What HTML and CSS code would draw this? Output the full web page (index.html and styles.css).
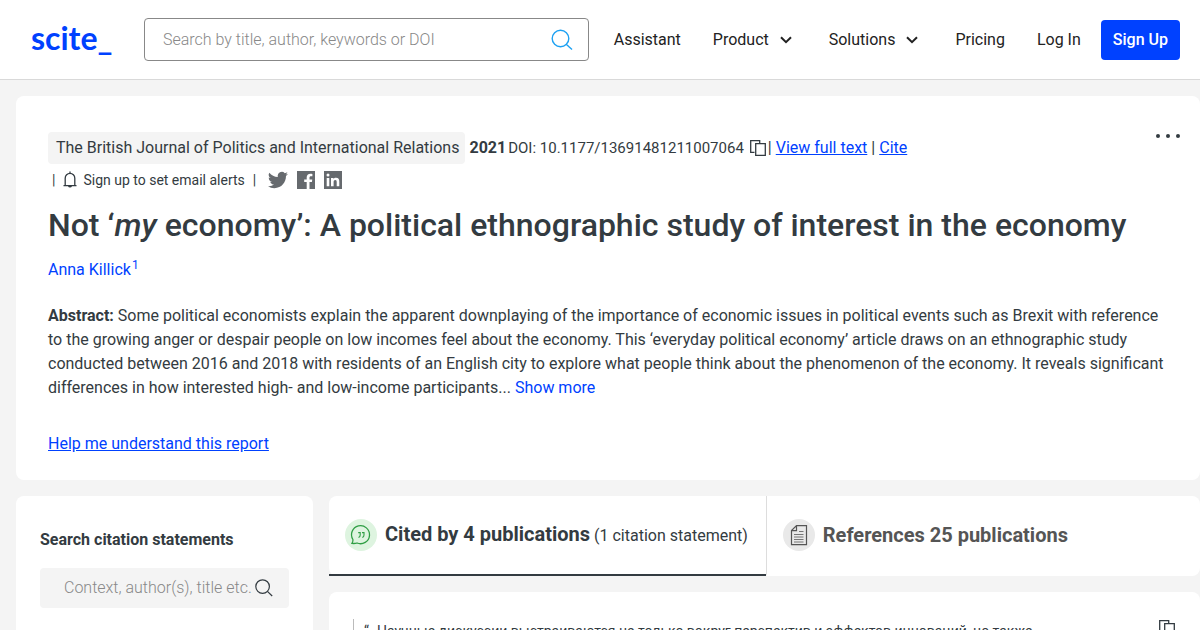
FILE: index.html
```html
<!DOCTYPE html>
<html lang="en">
<head>
<meta charset="utf-8">
<title>Not ‘my economy’: A political ethnographic study of interest in the economy</title>
<link rel="stylesheet" href="styles.css">
</head>
<body>
<header class="header">
  <a class="logo" href="#">scite_</a>
  <form class="search">
    <input class="search-input" type="text" aria-label="Search" placeholder="Search by title, author, keywords or DOI">
    <button class="icon-button search-button" type="button" aria-label="Submit search">
      <svg width="22" height="22" viewBox="0 0 22 22" fill="none" stroke="#1da1f2" stroke-width="1.4"><circle cx="9.5" cy="9.5" r="8.3"/><path d="M15.2 15.2l5.8 5.3"/></svg>
    </button>
  </form>
  <nav class="nav">
    <a class="nav-link" href="#">Assistant</a>
    <button class="nav-link nav-menu" type="button">Product
      <svg width="12" height="8" viewBox="0 0 12 8" fill="none" stroke="currentColor" stroke-width="2"><path d="M1 1.2l5 5 5-5"/></svg>
    </button>
    <button class="nav-link nav-menu" type="button">Solutions
      <svg width="12" height="8" viewBox="0 0 12 8" fill="none" stroke="currentColor" stroke-width="2"><path d="M1 1.2l5 5 5-5"/></svg>
    </button>
    <a class="nav-link" href="#">Pricing</a>
    <a class="nav-link" href="#">Log In</a>
    <a class="signup" href="#">Sign Up</a>
  </nav>
</header>
<main class="page">
  <article class="card paper">
    <div class="paper-top">
      <div class="meta">
        <span class="journal">The British Journal of Politics and International Relations</span>
        <strong class="year">2021</strong>
        <span class="doi">DOI: 10.1177/13691481211007064</span>
        <button class="icon-button copy" type="button" aria-label="Copy DOI">
          <svg width="18" height="18" viewBox="0 0 18 18" fill="none" stroke="#333b41" stroke-width="1.3"><path d="M5.5 13.4H1.7V1.7h9v2.5"/><path d="M6.7 4.7h9.6v11.6H6.7z"/></svg>
        </button>
        <span>|</span>
        <a class="link" href="#">View full text</a>
        <span>|</span>
        <a class="link" href="#">Cite</a>
      </div>
      <button class="icon-button more" type="button" aria-label="More actions">
        <svg width="24" height="4" viewBox="0 0 24 4" fill="#333b41"><circle cx="2" cy="2" r="2"/><circle cx="12" cy="2" r="2"/><circle cx="22" cy="2" r="2"/></svg>
      </button>
    </div>
    <div class="alerts">
      <span>|</span>
      <button class="alert-button" type="button">
        <svg width="14" height="18" viewBox="0 0 14 18" fill="none" stroke="#333b41" stroke-width="1.3"><path d="M.5 14.6h13M2.200 14.500V7.200a4.800 4.800 0 0 1 9.600 0v7.300M7 2.500V.5M5.600 15a1.500 1.500 0 0 0 2.800 0"/></svg>
        Sign up to set email alerts
      </button>
      <span>|</span>
      <div class="social">
        <a class="social-link" href="#" aria-label="Twitter"><svg width="20" height="18" viewBox="0 2 24 20" fill="#666a6e"><path d="M23.95 4.57a10 10 0 0 1-2.82.77 4.96 4.96 0 0 0 2.16-2.72c-.95.55-2 .96-3.13 1.18a4.92 4.92 0 0 0-8.38 4.48C7.69 8.1 4.07 6.13 1.64 3.16a4.92 4.92 0 0 0 1.52 6.57 4.9 4.9 0 0 1-2.23-.61v.06a4.92 4.92 0 0 0 3.95 4.83 5 5 0 0 1-2.21.08 4.94 4.94 0 0 0 4.6 3.42A9.87 9.87 0 0 1 0 19.54a13.99 13.99 0 0 0 7.55 2.21c9.05 0 14-7.5 14-13.98 0-.21 0-.42-.02-.63a9.94 9.94 0 0 0 2.42-2.57z"/></svg></a>
        <a class="social-link" href="#" aria-label="Facebook"><svg width="18" height="18" viewBox="0 0 18 18"><path fill="#666a6e" d="M0 0h18v18h-5.5v-6.9h2.4l.4-2.7h-2.8V6.700c0-.8.4-1.400 1.500-1.400h1.400V2.900c-3.800-.7-5.700.7-5.700 3.500v2H7.200v2.700h2.500V18H0z"/></svg></a>
        <a class="social-link" href="#" aria-label="LinkedIn"><svg width="18" height="18" viewBox="0 0 18 18"><path fill="#666a6e" d="M0 0h18v18H0z"/><path fill="#fff" d="M2.7 6.9h2.6v8.4H2.7zM7 6.9h2.5V8c.5-.8 1.3-1.3 2.5-1.3 2.5 0 3.3 1.5 3.3 4v4.6h-2.6v-4.1c0-1.4-.3-2.2-1.400-2.200-1.200 0-1.700.8-1.700 2.200v4.100H7z"/><circle cx="4" cy="4.1" r="1.5" fill="#fff"/></svg></a>
      </div>
    </div>
    <h1 class="title">Not ‘<em>my</em> economy’: A political ethnographic study of interest in the economy</h1>
    <p class="authors"><a class="author" href="#">Anna Killick<sup class="affil">1</sup></a></p>
    <p class="abstract"><strong>Abstract:</strong> Some political economists explain the apparent downplaying of the importance of economic issues in political events such as Brexit with reference to the growing anger or despair people on low incomes feel about the economy. This ‘everyday political economy’ article draws on an ethnographic study conducted between 2016 and 2018 with residents of an English city to explore what people think about the phenomenon of the economy. It reveals significant differences in how interested high- and low-income participants... <button class="show-more" type="button">Show more</button></p>
    <a class="link help" href="#">Help me understand this report</a>
  </article>
  <div class="columns">
    <aside class="card sidebar">
      <label class="sidebar-title" for="context">Search citation statements</label>
      <div class="filter">
        <input class="filter-input" id="context" type="text" placeholder="Context, author(s), title etc.">
        <button class="icon-button" type="button" aria-label="Search statements">
          <svg width="18" height="18" viewBox="0 0 18 18" fill="none" stroke="#333b41" stroke-width="1.2"><circle cx="7.6" cy="7.6" r="6.8"/><path d="M12.4 12.4l4.8 4.6"/></svg>
        </button>
      </div>
    </aside>
    <section class="results">
      <div class="card tabs">
        <button class="tab tab-active" type="button">
          <svg width="32" height="32" viewBox="0 0 32 32" fill="none"><circle cx="16" cy="16" r="16" fill="#def4e0"/><path d="M7 24.4c1-1.600 1.200-2.700.9-3.900A9 9 0 1 1 12 24c-1.500.500-3 .6-5 .4z" stroke="#2f9e44" stroke-width="1.3"/><path d="M13.200 13.600h2v2.300c0 1.300-.6 2.100-1.700 2.500M17 13.600h2v2.300c0 1.300-.6 2.100-1.700 2.500" stroke="#2f9e44" stroke-width="1.100"/></svg>
          <span class="tab-text"><strong class="tab-name">Cited by 4 publications</strong> (1 citation statement)</span>
        </button>
        <button class="tab" type="button">
          <svg width="32" height="32" viewBox="0 0 32 32" fill="none"><circle cx="16" cy="16" r="16" fill="#e9e9e9"/><path d="M13.500 6.600h10v19h-15v-14zM13.500 6.600v5h-5" stroke="#555" stroke-width="1.200"/><path d="M16 12.500h4.500M11 15.500h9.500M11 18h9.500M11 20.500h9.500M11 23h9.500" stroke="#777"/></svg>
          <strong class="tab-name tab-muted">References 25 publications</strong>
        </button>
      </div>
      <div class="card statement">
        <blockquote class="quote"><span>“</span><span>Научные дискуссии выстраиваются не только вокруг перспектив и эффектов инноваций, но также</span></blockquote>
        <button class="icon-button" type="button" aria-label="Copy statement">
          <svg width="18" height="18" viewBox="0 0 18 18" fill="none" stroke="#333b41" stroke-width="1.3"><path d="M5.500 13.400H1.700V1.700h9v2.500"/><path d="M6.700 4.700h9.600v11.600H6.700z"/></svg>
        </button>
      </div>
    </section>
  </div>
</main>
</body>
</html>
```
FILE: styles.css
```css
* { box-sizing: border-box; }
body {
  margin: 0;
  height: 100vh;
  overflow: hidden;
  background: #f4f4f4;
  color: #333b41;
  font: 16px/24px Roboto, "Liberation Sans", sans-serif;
}
button, input { font: inherit; color: inherit; }
button { border: 0; padding: 0; background: none; cursor: pointer; }
svg { display: block; flex: none; }
.header {
  display: flex;
  align-items: center;
  height: 80px;
  padding: 0 20px 0 31px;
  background: #fff;
  border-bottom: 1px solid #d9d9d9;
}
.logo {
  width: 113px;
  padding-bottom: 4px;
  color: #0041ff;
  font: 700 32px/32px Lato, sans-serif;
  text-decoration: none;
}
.search {
  display: flex;
  flex: 1;
  align-items: center;
  height: 43px;
  padding: 0 15px 0 18px;
  border: 1px solid #888;
  border-radius: 4px;
}
.search-input, .filter-input {
  flex: 1;
  min-width: 0;
  padding: 0;
  border: 0;
  outline: 0;
  background: none;
  font-weight: 300;
}
.search-input::placeholder, .filter-input::placeholder { color: #888; opacity: 1; }
.nav { display: flex; align-items: center; gap: 32px; padding-left: 25px; }
.nav-link { color: #222; text-decoration: none; }
.nav-menu { display: flex; align-items: center; gap: 11px; padding-right: 5px; }
.signup {
  margin-left: -12px;
  padding: 8px 12px;
  border-radius: 4px;
  background: #0041ff;
  color: #fff;
  font-weight: 500;
  text-decoration: none;
}
.page { padding: 16px 0 0 16px; }
.card { background: #fff; border-radius: 8px; }
.paper { padding: 36px 32px 24px; }
.paper-top { display: flex; justify-content: space-between; align-items: flex-start; margin-right: -12px; }
.meta { display: flex; align-items: center; gap: 4px; }
.journal { padding: 4px 6px 4px 8px; border-radius: 4px; background: #f4f4f4; }
.year { margin-right: -2px; }
.doi { font-size: 15px; }
.copy { margin: 0 -3px 0 1px; }
.link { color: #0041ff; text-decoration: underline; }
.more { padding-top: 2px; }
.alerts { display: flex; align-items: center; gap: 8px; height: 32px; padding-left: 4px; font-size: 14px; }
.alert-button { display: flex; align-items: center; gap: 6px; }
.social { display: flex; gap: 9px; padding-left: 4px; }
.title { margin: 8px 0 12px; font-size: 32px; line-height: 42px; font-weight: 500; }
.authors { margin: 0 0 22px; }
.author { color: #0041ff; text-decoration: none; }
.affil { padding-left: 1px; font-size: 12px; line-height: 0; }
.abstract { margin: 0 0 32px; }
.show-more { color: #0041ff; }
.columns { display: flex; gap: 16px; padding-top: 16px; }
.sidebar { flex: 0 0 297px; min-width: 0; height: 400px; padding: 32px 24px; }
.sidebar-title { display: block; font-weight: 700; }
.filter { display: flex; align-items: center; height: 40px; margin-top: 16px; padding: 0 16px 0 24px; border-radius: 4px; background: #f4f4f4; }
.results { flex: 1; min-width: 0; }
.tabs { display: flex; height: 80px; }
.tab { display: flex; align-items: center; gap: 8px; padding: 0 16px; border-bottom: 2px solid transparent; text-align: left; }
.tab-active { padding-right: 18px; border-bottom-color: #333b41; }
.tab + .tab { border-left: 1px solid #ddd; }
.tab-name { font-size: 20px; font-weight: 700; }
.tab-muted { color: #555; }
.statement { display: flex; justify-content: space-between; align-items: flex-start; margin-top: 16px; padding: 27px 24px; }
.quote { display: flex; gap: 8px; margin: 0; padding-left: 10px; border-left: 1px solid #bbb; font-size: 14px; }
```
